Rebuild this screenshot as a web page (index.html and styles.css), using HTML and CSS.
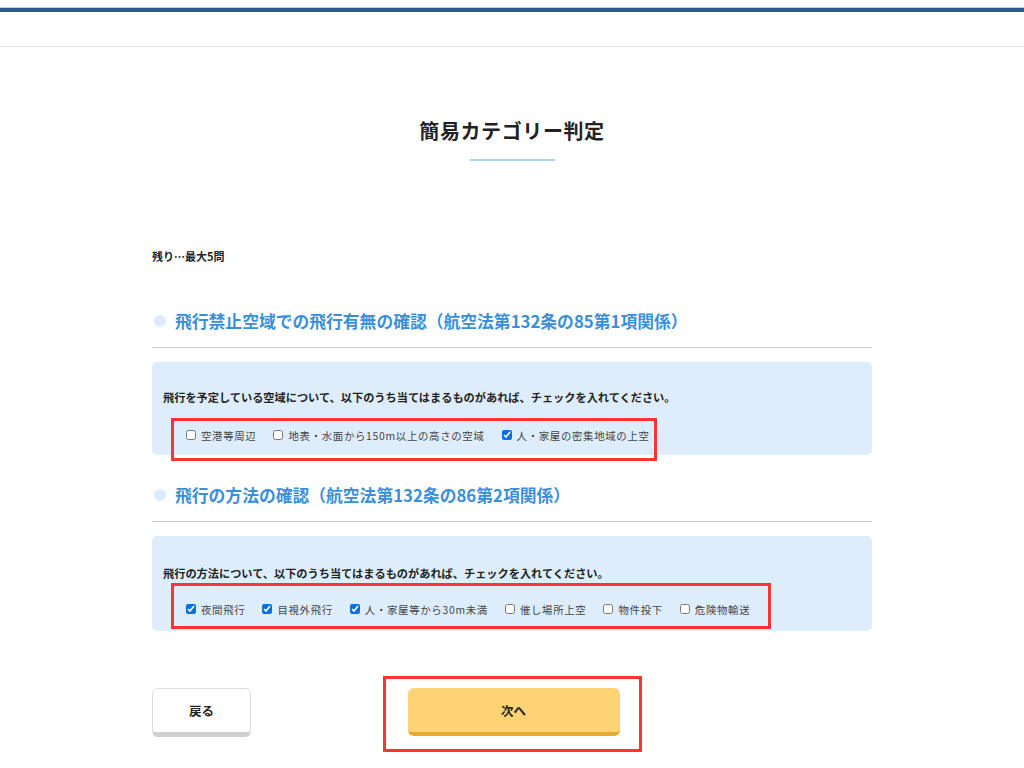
FILE: index.html
```html
<!DOCTYPE html>
<html lang="ja">

<head>
    <meta charset="UTF-8">
    <meta name="viewport" content="width=device-width, initial-scale=1.0">
    <title>簡易カテゴリー判定</title>
    <link rel="stylesheet" href="styles.css">
</head>

<body>
    <header class="header"></header>

    <main class="main">
        <div class="page_title">
            <h1>簡易カテゴリー判定</h1>
            <span class="title_line"></span>
        </div>

        <p class="remain">残り…最大5問</p>

        <section class="question">
            <h2 class="q_head">飛行禁止空域での飛行有無の確認（航空法第132条の85第1項関係）</h2>
            <div class="q_box">
                <p class="q_text">飛行を予定している空域について、以下のうち当てはまるものがあれば、チェックを入れてください。</p>
                <div class="options">
                    <label class="opt"><input type="checkbox">空港等周辺</label>
                    <label class="opt"><input type="checkbox">地表・水面から150m以上の高さの空域</label>
                    <label class="opt"><input type="checkbox" checked>人・家屋の密集地域の上空</label>
                </div>
            </div>
        </section>

        <section class="question">
            <h2 class="q_head">飛行の方法の確認（航空法第132条の86第2項関係）</h2>
            <div class="q_box q_box_2">
                <p class="q_text">飛行の方法について、以下のうち当てはまるものがあれば、チェックを入れてください。</p>
                <div class="options options_2">
                    <label class="opt"><input type="checkbox" checked>夜間飛行</label>
                    <label class="opt"><input type="checkbox" checked>目視外飛行</label>
                    <label class="opt"><input type="checkbox" checked>人・家屋等から30m未満</label>
                    <label class="opt"><input type="checkbox">催し場所上空</label>
                    <label class="opt"><input type="checkbox">物件投下</label>
                    <label class="opt"><input type="checkbox">危険物輸送</label>
                </div>
            </div>
        </section>

        <div class="buttons">
            <button class="btn btn_back">戻る</button>
            <div class="next_wrap">
                <button class="btn btn_next">次へ</button>
            </div>
        </div>
    </main>
</body>

</html>
```

FILE: styles.css
```css
html,
body {
    margin: 0;
    padding: 0;
    overflow: hidden;
}

body {
    background-color: #fff;
    font-family: "Noto Sans CJK JP", "Noto Sans", sans-serif;
    color: #222;
}

.header {
    height: 38px;
    border-top: 1px solid #ccc;
    border-bottom: 1px solid #e6e6e6;
    margin-top: 7px;
    box-shadow: inset 0 4px 0 #2c5b94;
}

.main {
    width: 720px;
    margin: 0 auto;
}

.page_title {
    display: flex;
    flex-direction: column;
    align-items: center;
    padding-top: 69px;
}

.page_title h1 {
    margin: 0;
    font-size: 20px;
    line-height: 30px;
    font-weight: bold;
    color: #222;
    letter-spacing: 0.6px;
}

.title_line {
    display: block;
    width: 85px;
    height: 2px;
    margin-top: 13px;
    background-color: #a8d1f3;
}

.remain {
    margin: 87px 0 0;
    font-size: 11px;
    line-height: 16px;
    font-weight: bold;
}

.q_head {
    display: flex;
    align-items: center;
    margin: 45px 0 0;
    padding: 0 0 14px 2px;
    border-bottom: 1px solid #c8c8c8;
    font-size: 16.8px;
    line-height: 24px;
    font-weight: bold;
    color: #3a8fdc;
}

.question + .question .q_head {
    margin-top: 28px;
}

.q_head::before {
    content: "";
    width: 12px;
    height: 12px;
    border-radius: 50%;
    background-color: #ddebfb;
    margin-right: 9px;
    flex-shrink: 0;
}

.q_box {
    margin-top: 14px;
    background-color: #deedfc;
    border-radius: 5px;
    padding: 25px 11px 0;
    height: 68px;
}

.q_box_2 {
    padding-top: 27px;
}

.q_text {
    margin: 0;
    font-size: 11.2px;
    line-height: 20px;
    font-weight: bold;
    color: #222;
}

.options {
    display: flex;
    align-items: center;
    gap: 17px;
    width: 486px;
    height: 43px;
    margin: 11px 0 0 8px;
    padding: 0 0 9px 12px;
    border: 3px solid #f33;
    box-sizing: border-box;
}

.options_2 {
    width: 600px;
    height: 46px;
    margin-top: 0;
    padding: 6px 0 0 12px;
    gap: 17px;
}

.opt {
    display: flex;
    align-items: center;
    font-size: 10.4px;
    color: #444;
    letter-spacing: 0.7px;
    white-space: nowrap;
}

.opt input {
    width: 10px;
    height: 10px;
    margin: 0 5px 0 0;
    accent-color: #0a6fe0;
}

.buttons {
    display: grid;
    grid-template-columns: 1fr auto 1fr;
    align-items: start;
    margin-top: 45px;
}

.btn {
    font-family: "Noto Sans CJK JP", "Noto Sans", sans-serif;
    font-size: 12.5px;
    font-weight: bold;
    color: #222;
    cursor: pointer;
    border-radius: 6px;
}

.btn_back {
    justify-self: start;
    margin-top: 12px;
    width: 99px;
    height: 49px;
    background-color: #fff;
    border: 1px solid #ddd;
    border-bottom: 5px solid #cfcfcf;
}

.next_wrap {
    grid-column: 2;
    border: 3px solid #f33;
    padding: 9px 19px 13px 22px;
}

.btn_next {
    display: block;
    width: 212px;
    height: 48px;
    background-color: #fdd375;
    border: none;
    border-bottom: 4px solid #e6ab2e;
}
```
